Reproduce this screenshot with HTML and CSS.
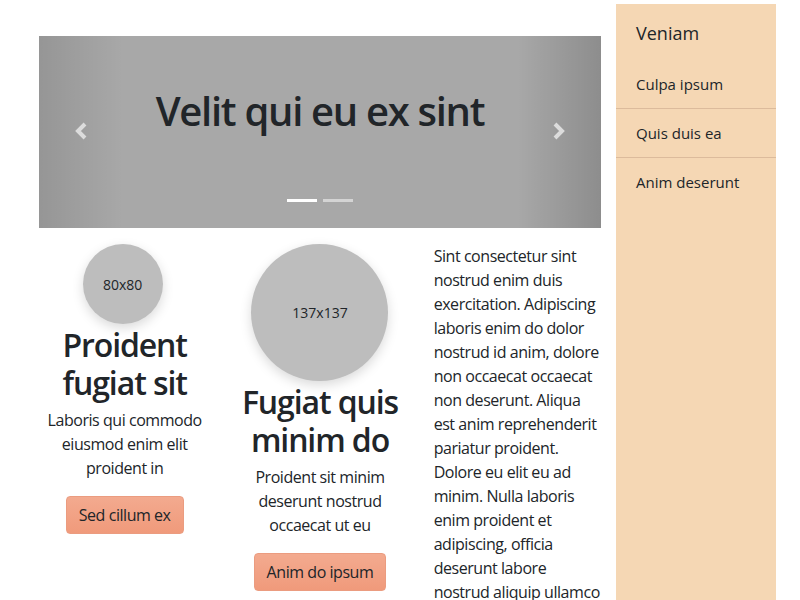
FILE: index.html
```html
<!DOCTYPE html>
<html lang="en">
<head>
<meta charset="utf-8">
<title>Page</title>
<link rel="stylesheet" href="styles.css">
</head>
<body>
<div class="layout">
  <main class="main">
    <section class="carousel">
      <div class="ctrl ctrl-left">
        <svg width="16" height="20" viewBox="0 0 16 20"><path d="M11 3 L4 10 L11 17" fill="none" stroke="currentColor" stroke-width="4"/></svg>
      </div>
      <h1 class="carousel-title">Velit qui eu ex sint</h1>
      <div class="ctrl ctrl-right">
        <svg width="16" height="20" viewBox="0 0 16 20"><path d="M5 3 L12 10 L5 17" fill="none" stroke="currentColor" stroke-width="4"/></svg>
      </div>
      <div class="indicators">
        <span class="ind active"></span>
        <span class="ind"></span>
      </div>
    </section>
    <section class="cols">
      <div class="col">
        <div class="avatar small">80x80</div>
        <h2 class="col-title">Proident fugiat sit</h2>
        <p class="col-text">Laboris qui commodo eiusmod enim elit proident in</p>
        <button class="btn">Sed cillum ex</button>
      </div>
      <div class="col">
        <div class="avatar big">137x137</div>
        <h2 class="col-title">Fugiat quis minim do</h2>
        <p class="col-text">Proident sit minim deserunt nostrud occaecat ut eu</p>
        <button class="btn">Anim do ipsum</button>
      </div>
      <div class="col col-prose">
        <p>Sint consectetur sint nostrud enim duis exercitation. Adipiscing laboris enim do dolor nostrud id anim, dolore non occaecat occaecat non deserunt. Aliqua est anim reprehenderit pariatur proident. Dolore eu elit eu ad minim. Nulla laboris enim proident et adipiscing, officia deserunt labore nostrud aliquip ullamco</p>
      </div>
    </section>
  </main>
  <aside class="sidebar">
    <h3 class="side-title">Veniam</h3>
    <ul class="side-list">
      <li>Culpa ipsum</li>
      <li>Quis duis ea</li>
      <li>Anim deserunt</li>
    </ul>
  </aside>
</div>
</body>
</html>
```

FILE: styles.css
```css
* { box-sizing: border-box; }
html, body { margin: 0; padding: 0; }
body {
  font-family: "Segoe UI", "Open Sans", "Noto Sans", sans-serif;
  color: #212529;
  background: #fff;
  font-size: 16px;
  line-height: 1.5;
  letter-spacing: -0.45px;
  height: 600px;
  overflow: hidden;
}
.layout {
  display: flex;
  gap: 15px;
  padding: 4px 24px 0 39px;
  height: 600px;
}
.main {
  flex: 1;
  padding-top: 32px;
  min-width: 0;
}
.carousel {
  position: relative;
  height: 192px;
  background: #a8a8a8;
  display: flex;
  align-items: center;
  justify-content: center;
  padding-bottom: 42px;
}
.carousel-title {
  margin: 0;
  font-size: 40px;
  font-weight: 600;
  line-height: 1.2;
  letter-spacing: -1.3px;
  color: #212529;
}
.ctrl {
  position: absolute;
  top: 0;
  bottom: 0;
  width: 15%;
  display: flex;
  align-items: center;
  justify-content: center;
  color: #dcdcdc;
}
.ctrl-left { left: 0; background: linear-gradient(to right, rgba(0,0,0,0.11), rgba(0,0,0,0)); }
.ctrl-right { right: 0; background: linear-gradient(to left, rgba(0,0,0,0.16), rgba(0,0,0,0)); }
.ctrl-left svg { margin: -2px 0 0 2px; }
.ctrl-right svg { margin: -2px 2px 0 0; }
.indicators {
  position: absolute;
  left: 0;
  right: 0;
  bottom: 26px;
  display: flex;
  justify-content: center;
  gap: 6px;
}
.ind {
  width: 30px;
  height: 3px;
  background: rgba(255,255,255,0.5);
}
.ind.active { background: #fff; }
.cols {
  display: grid;
  grid-template-columns: 1fr 1fr 1fr;
  gap: 24px;
  padding-top: 16px;
}
.col {
  display: flex;
  flex-direction: column;
  align-items: center;
  text-align: center;
  min-width: 0;
}
.avatar {
  border-radius: 50%;
  background: #bdbdbd;
  display: flex;
  align-items: center;
  justify-content: center;
  font-size: 14px;
  letter-spacing: 0;
  color: #212529;
  box-shadow: 0 4px 12px rgba(0,0,0,0.15);
}
.avatar.small { width: 80px; height: 80px; margin-left: -4px; }
.avatar.big { width: 137px; height: 137px; }
.col-title {
  margin: 2px 0 0;
  font-size: 32px;
  font-weight: 600;
  line-height: 1.2;
  letter-spacing: -1.1px;
}
.col-text {
  margin: 5px 0 16px;
}
.btn {
  font: inherit;
  letter-spacing: inherit;
  color: #212529;
  padding: 6px 12px;
  border: 1px solid #eb9c80;
  border-radius: 4px;
  background: linear-gradient(#f3aa8f, #f09a7b);
  line-height: 24px;
}
.col-prose {
  align-items: stretch;
  text-align: left;
  padding-left: 4px;
}
.col-prose p { margin: 0; }
.sidebar {
  width: 160px;
  flex: none;
  background: #f5d7b4;
  height: 620px;
  letter-spacing: 0;
}
.side-title {
  margin: 0;
  padding: 16px 20px 13px;
  font-size: 18px;
  font-weight: 400;
  line-height: 1.5;
}
.side-list {
  list-style: none;
  margin: 0;
  padding: 0;
}
.side-list li {
  padding: 12px 20px;
  font-size: 15px;
  line-height: 24px;
  border-bottom: 1px solid #dcbb9c;
}
.side-list li:last-child { border-bottom: none; }
```
